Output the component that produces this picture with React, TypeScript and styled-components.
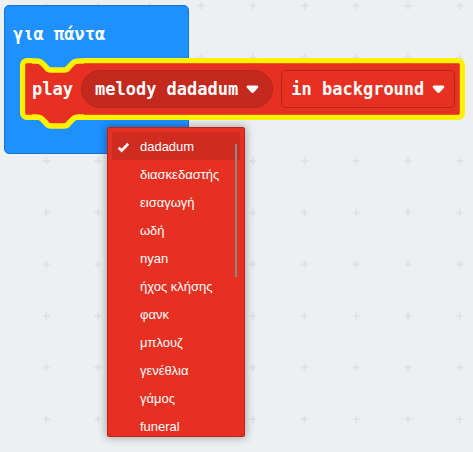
import React, { useState } from "react";
import styled, { createGlobalStyle } from "styled-components";

const color = {
  canvas: "#ecf0f1",
  event: "#1e90ff",
  eventEdge: "#1873cc",
  music: "#e63022",
  musicDark: "#c3291d",
  musicEdge: "#b8261b",
  glow: "#fff200",
};

const GlobalStyle = createGlobalStyle`
  *, *::before, *::after { box-sizing: border-box; }
  body { margin: 0; background: ${color.canvas}; }
`;

const Workspace = styled.main`
  position: relative;
  display: flex;
  align-items: flex-start;
  min-height: 100vh;
  padding: 5px 4px;
  overflow: hidden;
  background: ${color.canvas};
`;

const Grid = styled.svg`
  position: absolute;
  inset: 0;
  width: 100%;
  height: 100%;
`;

const EventBlock = styled.section`
  position: relative;
  display: flex;
  flex-direction: column;
  width: 185px;
  padding: 16px 0 33px 15px;
  background: ${color.event};
  border: 1px solid ${color.eventEdge};
  border-radius: 5px;
`;

const blockFont = `
  font-family: "DejaVu Sans Mono", "Liberation Mono", monospace;
  font-size: 17px;
  font-weight: 700;
  line-height: 24px;
  color: #fff;
`;

const EventTitle = styled.h1`
  ${blockFont}
  margin: 0 0 12px -7px;
`;

const StatementBlock = styled.div`
  position: relative;
  display: flex;
  align-items: center;
  gap: 8px;
  width: max-content;
  padding: 7px 5px 7px 7px;
  background: ${color.music};
  border: 5px solid ${color.glow};
  border-radius: 7px;
  box-shadow: inset 0 0 0 1px #eb5a1b;
`;

const NotchShape = styled.svg<{ $edge: "top" | "bottom" }>`
  position: absolute;
  left: 7px;
  ${(p) => (p.$edge === "top" ? "top: -5px;" : "bottom: -14px;")}
`;

const Label = styled.span`
  ${blockFont}
`;

const MelodyField = styled.div`
  position: relative;
`;

const MelodyButton = styled.button`
  ${blockFont}
  display: flex;
  align-items: center;
  gap: 8px;
  height: 38px;
  padding: 0 13px;
  white-space: nowrap;
  background: ${color.musicDark};
  border: 1px solid ${color.musicEdge};
  border-radius: 19px;
`;

const ModeField = styled.label`
  display: grid;
  align-items: center;
`;

const ModeSelect = styled.select`
  ${blockFont}
  grid-area: 1 / 1;
  height: 38px;
  padding: 0 29px 0 9px;
  appearance: none;
  background: transparent;
  border: 1px solid ${color.musicEdge};
  border-radius: 5px;

  option {
    background: ${color.music};
  }
`;

const ModeArrow = styled.span`
  grid-area: 1 / 1;
  display: flex;
  justify-self: end;
  margin-right: 10px;
  pointer-events: none;
`;

const Menu = styled.div`
  position: absolute;
  top: 57px;
  left: 26px;
  width: 138px;
  height: 310px;
  padding: 4px;
  overflow: hidden;
  background: ${color.music};
  border: 1px solid ${color.musicEdge};
  border-radius: 2px;
  box-shadow: 0 0 8px 1px rgba(0, 0, 0, 0.3);
`;

const MenuItem = styled.button<{ $selected: boolean }>`
  display: flex;
  align-items: center;
  gap: 10px;
  width: 100%;
  height: 28px;
  padding: 2px 5px 0;
  font: 13px/20px "Liberation Sans", Arial, sans-serif;
  color: #fff;
  white-space: nowrap;
  background: ${(p) => (p.$selected ? "#cf2b1f" : "transparent")};
  border: 0;
`;

const CheckSlot = styled.span`
  display: flex;
  flex: none;
  width: 13px;
`;

const ScrollThumb = styled.span`
  position: absolute;
  top: 16px;
  right: 7px;
  width: 2px;
  height: 133px;
  background: #888;
`;

const melodies = [
  "dadadum",
  "διασκεδαστής",
  "εισαγωγή",
  "ωδή",
  "nyan",
  "ήχος κλήσης",
  "φανκ",
  "μπλουζ",
  "γενέθλια",
  "γάμος",
  "funeral",
];

const notchCurve =
  "M0 3 H4 C7 3 9 4 10 5 L14 9 C15 11 16 12 19 12 H32 C35 12 36 11 37 9 L41 5 C42 4 44 3 47 3 H52";

function Notch({ edge, fill }: { edge: "top" | "bottom"; fill: string }) {
  return (
    <NotchShape $edge={edge} width="52" height="15" viewBox="0 0 52 15" aria-hidden="true">
      {edge === "top" ? (
        <path d={`${notchCurve} V15 H0 Z`} fill={color.music} />
      ) : null}
      <path d={`${notchCurve} V0 H0 Z`} fill={fill} />
      <path d={notchCurve} fill="none" stroke={color.glow} strokeWidth="5.5" />
    </NotchShape>
  );
}

function Arrow() {
  return (
    <svg width="13" height="9" viewBox="0 0 13 9" aria-hidden="true">
      <path
        d="M2.2 .5H10.8C12.5.5 12.9 2 11.8 3L7.9 7.3C7 8.3 6 8.3 5.1 7.3L1.2 3C.1 2 .5.5 2.2.5Z"
        fill="#fff"
      />
    </svg>
  );
}

function Check() {
  return (
    <svg width="13" height="11" viewBox="0 0 13 11" aria-hidden="true">
      <path d="M1.6 5.6L4.6 8.6L11.2 1.8" fill="none" stroke="#fff" strokeWidth="2.7" />
    </svg>
  );
}

export default function App() {
  const [melody, setMelody] = useState("dadadum");
  const [open, setOpen] = useState(true);

  return (
    <>
      <GlobalStyle />
      <Workspace>
        <Grid aria-hidden="true">
          <defs>
            <pattern
              id="crosses"
              width="31"
              height="31"
              patternUnits="userSpaceOnUse"
              patternTransform="translate(20.5 31.7) scale(1.6667)"
            >
              <path d="M13.2 15.5H17.8M15.5 13.2V17.8" stroke="#dde1e2" strokeWidth="1" />
            </pattern>
          </defs>
          <rect width="100%" height="100%" fill="url(#crosses)" />
        </Grid>
        <EventBlock>
          <EventTitle>για πάντα</EventTitle>
          <StatementBlock>
            <Notch edge="top" fill={color.event} />
            <Notch edge="bottom" fill={color.music} />
            <Label>play</Label>
            <MelodyField>
              <MelodyButton
                type="button"
                aria-haspopup="listbox"
                aria-expanded={open}
                onClick={() => setOpen(!open)}
              >
                melody {melody}
                <Arrow />
              </MelodyButton>
              {open && (
                <Menu role="listbox" aria-label="melody">
                  {melodies.map((name) => (
                    <MenuItem
                      key={name}
                      type="button"
                      role="option"
                      aria-selected={name === melody}
                      $selected={name === melody}
                      onClick={() => {
                        setMelody(name);
                        setOpen(false);
                      }}
                    >
                      <CheckSlot>{name === melody && <Check />}</CheckSlot>
                      {name}
                    </MenuItem>
                  ))}
                  <ScrollThumb />
                </Menu>
              )}
            </MelodyField>
            <ModeField>
              <ModeSelect aria-label="playback mode" defaultValue="in background">
                <option>in background</option>
              </ModeSelect>
              <ModeArrow>
                <Arrow />
              </ModeArrow>
            </ModeField>
          </StatementBlock>
        </EventBlock>
      </Workspace>
    </>
  );
}
